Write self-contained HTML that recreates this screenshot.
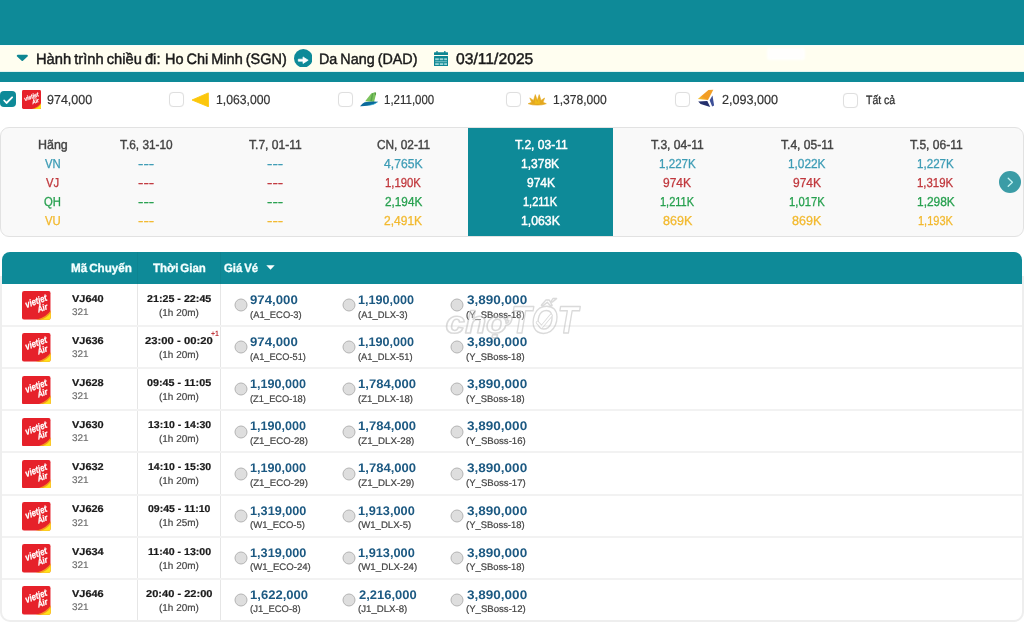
<!DOCTYPE html><html lang="vi"><head><meta charset="utf-8"><title>Hành trình chiều đi</title><style>
*{box-sizing:border-box;margin:0;padding:0}
html,body{width:1024px;height:636px;overflow:hidden;background:#fff}
body{position:relative;font-family:"Liberation Sans",sans-serif;color:#222;text-rendering:geometricPrecision}
.abs{position:absolute}
.t{position:absolute;white-space:nowrap;line-height:1;transform-origin:0 50%}
.top{left:0;top:0;width:1024px;height:82px;background:#0e8a98}
.band{left:0;top:45px;width:1024px;height:27px;background:#fffef0;border-top:1px solid #f4fcfb;border-bottom:1px solid #e4f4ee}
.patch{left:767px;top:48px;width:38px;height:12px;background:#fff;border-radius:3px;filter:blur(1px);opacity:.9}
.cb{width:15px;height:15px;border:1px solid #dfdfdf;border-radius:4px;background:#fff;top:92px;box-shadow:0 0 1px rgba(0,0,0,.06)}
.cbon{left:0;top:91.3px;width:16px;height:15.5px;border-radius:4px;background:#0e8a98}
.grid{left:0;top:127px;width:1024px;height:110px;border:1px solid #e2e2e2;border-radius:9px;background:#f9f9f9}
.sel{left:468px;top:128px;width:145px;height:108px;background:#0e8a98}
.nx{left:999px;top:171px;width:22px;height:22px;border-radius:50%;background:#3b9ca6}
.th{left:2px;top:252px;width:1020px;height:32px;background:#0e8a98;border-radius:8px 8px 0 0}
.tb{left:0;top:276px;width:1024px;height:346px;border:2px solid #eee;border-top:0;border-radius:0 0 10px 10px}
.hl{left:2px;width:1020px;height:2px;background:#f2f2f2}
.vl{top:284px;width:1px;height:336px;background:#e6e6e6}
.vh{top:252px;width:1px;height:32px;background:rgba(0,0,0,.045)}
.rd{width:13px;height:13px;border-radius:50%;background:#dedede;border:1px solid #b9b9b9}
</style></head><body>
<div class="abs top"></div><div class="abs band"></div><div class="abs patch"></div>
<svg class="abs" style="left:16px;top:54px" width="13" height="8" viewBox="0 0 13 8"><path d="M1.7 1.8 L10.9 1.8 L6.3 6Z" fill="#0e8692" stroke="#0e8692" stroke-linejoin="round" stroke-width="1.9"/></svg>
<div class="t" style="left:36.12px;top:52px;font-size:15px;color:#1a1a1a;transform:scaleX(0.9794);word-spacing:-1px;-webkit-text-stroke:.45px #1a1a1a;">Hành trình chiều đi:</div>
<div class="t" style="left:165.04px;top:52px;font-size:15px;color:#1a1a1a;transform:scaleX(0.9646);word-spacing:-1px;-webkit-text-stroke:.45px #1a1a1a;">Ho Chi Minh (SGN)</div>
<svg class="abs" style="left:293.9px;top:48.9px" width="18.6" height="18.6" viewBox="0 0 18.6 18.6"><circle cx="9.3" cy="9.3" r="9.3" fill="#0e8a98"/><path d="M4.3 10.2 H9 V7.9 L14.2 11.2 L9 14.5 V12.2 H4.3 Z" fill="#fff" stroke="#fff" stroke-width=".7" stroke-linejoin="round"/></svg>
<div class="t" style="left:318.95px;top:52px;font-size:15px;color:#1a1a1a;transform:scaleX(0.9561);word-spacing:-1px;-webkit-text-stroke:.45px #1a1a1a;">Da Nang (DAD)</div>
<svg class="abs" style="left:433.9px;top:50.6px" width="14.2" height="15.4" viewBox="0 0 14.2 15.4"><g fill="#0e8692"><rect x="2.3" y="0" width="1.4" height="2" rx=".5"/><rect x="10.1" y="0" width="1.4" height="2" rx=".5"/><rect x="0" y="1.3" width="14.1" height="2.8" rx=".6"/><rect x="0" y="5.1" width="14.1" height="10.1" rx=".5"/></g><g fill="#c9f1ee" opacity=".75"><rect x="1.2" y="7.3" width="3.6" height="1.9"/><rect x="5.7" y="7.3" width="3.6" height="1.9"/><rect x="10.2" y="7.3" width="2.8" height="1.9"/><rect x="1.2" y="10.4" width="11.8" height=".8"/><rect x="1.2" y="12.2" width="3.6" height="1.8"/><rect x="5.7" y="12.2" width="3.6" height="1.8"/><rect x="10.2" y="12.2" width="2.8" height="1.8"/></g></svg>
<div class="t" style="left:455.53px;top:52px;font-size:15.5px;color:#1a1a1a;transform:scaleX(1.0119);-webkit-text-stroke:.45px #1a1a1a;">03/11/2025</div>
<div class="abs cbon"></div><svg class="abs" style="left:2px;top:94px" width="12" height="11" viewBox="0 0 12 11"><path d="M2.2 6.5 L4.5 9 L10.1 3.3" fill="none" stroke="#fff" stroke-width="1.8" stroke-linecap="round" stroke-linejoin="round"/></svg>
<svg class="abs" style="left:22.25px;top:89.7px;opacity:.995" width="19" height="19" viewBox="0 0 28.7 28.7"><defs><clipPath id="lc1"><rect width="28.7" height="28.7" rx="2.2"/></clipPath></defs><g clip-path="url(#lc1)"><rect width="28.7" height="28.7" fill="#e6212a"/><path d="M29 19 L29 29 L13.5 29 Q24.5 26.5 29 19Z" fill="#f7931e"/><path d="M29 21 L29 29 L18 29 Q25.5 27 29 21Z" fill="#fde21a"/></g><g font-family="Liberation Sans,sans-serif" font-weight="bold" font-style="italic" fill="#fff" text-anchor="middle"><text x="14.2" y="13.4" font-size="9.6" textLength="22.6" lengthAdjust="spacingAndGlyphs" transform="rotate(-20 14.2 10.4)" stroke="#fff" stroke-width=".25">vietjet</text><text x="20.4" y="19.9" font-size="8.6" textLength="10.6" lengthAdjust="spacingAndGlyphs" transform="rotate(-20 20.4 17)" stroke="#fff" stroke-width=".25">Air</text></g></svg>
<div class="t" style="left:47.40px;top:93px;font-size:13px;color:#333;transform:scaleX(0.9608);-webkit-text-stroke:.2px #333;">974,000</div>
<div class="abs cb" style="left:168.8px"></div>
<svg class="abs" style="left:191px;top:91.5px" width="18.5" height="15.5" viewBox="0 0 18.5 15.5"><path d="M1 8 L17.3 0.9 L17.5 14.8 Z" fill="#fcc70c" stroke="#fcc70c" stroke-width=".9" stroke-linejoin="round"/></svg>
<div class="t" style="left:216.04px;top:93px;font-size:13px;color:#333;transform:scaleX(0.9406);-webkit-text-stroke:.2px #333;">1,063,000</div>
<div class="abs cb" style="left:337.6px"></div>
<svg class="abs" style="left:359px;top:91px" width="20" height="17" viewBox="0 0 20 17"><path d="M6.1 10.3 L12.2 2.4 L16.5 0.9 L17.1 2.8 L15.1 10.9 Z" fill="#7cc25c"/><path d="M11.3 10 L13 2.4 L14.3 1.9 L13 10Z" fill="#4f9f46" opacity=".8"/><path d="M15.6 2 L16.6 1.6 L16.9 3 L16.4 4.6Z" fill="#3c7a3a" opacity=".8"/><path d="M1 15.2 Q3.5 12 5.6 11.2 Q12 10.2 19.2 10.7 Q16 13 14.2 13.4 Q8 15.4 1 15.2Z" fill="#0b6a9c"/><path d="M8 14.6 Q14 13.6 19.2 10.7 Q16 13.4 13.6 14 Q11 14.7 8 14.6Z" fill="#36b3d6" opacity=".8"/></svg>
<div class="t" style="left:384.20px;top:93px;font-size:13px;color:#333;transform:scaleX(0.8831);-webkit-text-stroke:.2px #333;">1,211,000</div>
<div class="abs cb" style="left:506.2px"></div>
<svg class="abs" style="left:528px;top:93.5px" width="19" height="12" viewBox="0 0 19 12"><path d="M0.2 9.7 L3.6 8.3 L1.8 3.9 L5.5 6.4 L7.3 0.6 L9.3 6.4 L11.2 0.6 L13 6.4 L16.6 4 L15 8.3 L18.3 9.7 Q14 11.3 9.2 11.1 Q4.5 11.3 0.2 9.7Z" fill="#e4a81f" stroke="#e4a81f" stroke-width=".6" stroke-linejoin="round"/><path d="M6.6 9.8 L7.4 3.2 L9.3 8.6 L11.1 3.2 L12 9.8Z" fill="#f2c318" opacity=".7"/></svg>
<div class="t" style="left:552.90px;top:93px;font-size:13px;color:#333;transform:scaleX(0.9300);-webkit-text-stroke:.2px #333;">1,378,000</div>
<div class="abs cb" style="left:674.9px"></div>
<svg class="abs" style="left:697px;top:89px" width="18" height="19" viewBox="0 0 18 19"><defs><linearGradient id="vg" x1="0" y1="1" x2="1" y2="0"><stop offset="0" stop-color="#f3cf3a"/><stop offset=".35" stop-color="#f39c22"/><stop offset="1" stop-color="#f0a02a"/></linearGradient></defs><path d="M0.8 10.1 L11.4 1.1 L16.3 0.7 L11 10.9Z" fill="url(#vg)"/><path d="M1.2 12.6 L10.3 12.1 L13.2 17.9 L3.6 15Z" fill="#232f6c"/><path d="M12.6 11.3 L15.5 6.6 L17.1 16.5 L15.2 17.5Z" fill="#3d4f97"/></svg>
<div class="t" style="left:721.77px;top:93px;font-size:13px;color:#333;transform:scaleX(0.9698);-webkit-text-stroke:.2px #333;">2,093,000</div>
<div class="abs cb" style="left:843.2px;top:93px"></div>
<div class="t" style="left:865.54px;top:94px;font-size:12px;color:#333;transform:scaleX(0.8748);-webkit-text-stroke:.3px #333;">Tất cả</div>
<div class="abs grid"></div><div class="abs sel"></div>
<div class="t" style="left:37.70px;top:138px;font-size:13px;color:#444;transform:scaleX(0.9588);-webkit-text-stroke:.4px #444;">Hãng</div>
<div class="t" style="left:44.95px;top:157px;font-size:13px;color:#3d9cb5;transform:scaleX(0.8700);-webkit-text-stroke:.3px #3d9cb5;">VN</div>
<div class="t" style="left:46.20px;top:176px;font-size:13px;color:#c0383d;transform:scaleX(0.8700);-webkit-text-stroke:.3px #c0383d;">VJ</div>
<div class="t" style="left:44.10px;top:195px;font-size:13px;color:#27a04f;transform:scaleX(0.8700);-webkit-text-stroke:.3px #27a04f;">QH</div>
<div class="t" style="left:44.95px;top:214px;font-size:13px;color:#f2b92f;transform:scaleX(0.8700);-webkit-text-stroke:.3px #f2b92f;">VU</div>
<div class="t" style="left:119.56px;top:138px;font-size:13px;color:#444;transform:scaleX(0.9109);-webkit-text-stroke:.4px #444;">T.6, 31-10</div>
<div class="t" style="left:137.75px;top:157px;font-size:13px;color:#3d9cb5;transform:scaleX(1.2428);-webkit-text-stroke:.3px #3d9cb5;">---</div>
<div class="t" style="left:137.75px;top:176px;font-size:13px;color:#c0383d;transform:scaleX(1.2428);-webkit-text-stroke:.3px #c0383d;">---</div>
<div class="t" style="left:137.75px;top:195px;font-size:13px;color:#27a04f;transform:scaleX(1.2428);-webkit-text-stroke:.3px #27a04f;">---</div>
<div class="t" style="left:137.75px;top:214px;font-size:13px;color:#f2b92f;transform:scaleX(1.2428);-webkit-text-stroke:.3px #f2b92f;">---</div>
<div class="t" style="left:248.56px;top:138px;font-size:13px;color:#444;transform:scaleX(0.9287);-webkit-text-stroke:.4px #444;">T.7, 01-11</div>
<div class="t" style="left:266.75px;top:157px;font-size:13px;color:#3d9cb5;transform:scaleX(1.2428);-webkit-text-stroke:.3px #3d9cb5;">---</div>
<div class="t" style="left:266.75px;top:176px;font-size:13px;color:#c0383d;transform:scaleX(1.2428);-webkit-text-stroke:.3px #c0383d;">---</div>
<div class="t" style="left:266.75px;top:195px;font-size:13px;color:#27a04f;transform:scaleX(1.2428);-webkit-text-stroke:.3px #27a04f;">---</div>
<div class="t" style="left:266.75px;top:214px;font-size:13px;color:#f2b92f;transform:scaleX(1.2428);-webkit-text-stroke:.3px #f2b92f;">---</div>
<div class="t" style="left:377.11px;top:138px;font-size:13px;color:#444;transform:scaleX(0.9117);-webkit-text-stroke:.4px #444;">CN, 02-11</div>
<div class="t" style="left:384.36px;top:157px;font-size:13px;color:#3d9cb5;transform:scaleX(0.9351);-webkit-text-stroke:.3px #3d9cb5;">4,765K</div>
<div class="t" style="left:385.41px;top:176px;font-size:13px;color:#c0383d;transform:scaleX(0.8706);-webkit-text-stroke:.3px #c0383d;">1,190K</div>
<div class="t" style="left:384.81px;top:195px;font-size:13px;color:#27a04f;transform:scaleX(0.9046);-webkit-text-stroke:.3px #27a04f;">2,194K</div>
<div class="t" style="left:384.40px;top:214px;font-size:13px;color:#f2b92f;transform:scaleX(0.9243);-webkit-text-stroke:.3px #f2b92f;">2,491K</div>
<div class="t" style="left:514.56px;top:138px;font-size:13px;color:#fff;transform:scaleX(0.9287);-webkit-text-stroke:.45px #fff;">T.2, 03-11</div>
<div class="t" style="left:521.36px;top:157px;font-size:13px;color:#fff;transform:scaleX(0.9253);-webkit-text-stroke:.45px #fff;">1,378K</div>
<div class="t" style="left:526.57px;top:176px;font-size:13px;color:#fff;transform:scaleX(0.9244);-webkit-text-stroke:.45px #fff;">974K</div>
<div class="t" style="left:523.43px;top:195px;font-size:13px;color:#fff;transform:scaleX(0.8461);-webkit-text-stroke:.45px #fff;">1,211K</div>
<div class="t" style="left:520.99px;top:214px;font-size:13px;color:#fff;transform:scaleX(0.9427);-webkit-text-stroke:.45px #fff;">1,063K</div>
<div class="t" style="left:651.46px;top:138px;font-size:13px;color:#444;transform:scaleX(0.9287);-webkit-text-stroke:.4px #444;">T.3, 04-11</div>
<div class="t" style="left:658.94px;top:157px;font-size:13px;color:#3d9cb5;transform:scaleX(0.8930);-webkit-text-stroke:.3px #3d9cb5;">1,227K</div>
<div class="t" style="left:663.47px;top:176px;font-size:13px;color:#c0383d;transform:scaleX(0.9244);-webkit-text-stroke:.3px #c0383d;">974K</div>
<div class="t" style="left:660.33px;top:195px;font-size:13px;color:#27a04f;transform:scaleX(0.8461);-webkit-text-stroke:.3px #27a04f;">1,211K</div>
<div class="t" style="left:662.85px;top:214px;font-size:13px;color:#f2b92f;transform:scaleX(0.9647);-webkit-text-stroke:.3px #f2b92f;">869K</div>
<div class="t" style="left:780.56px;top:138px;font-size:13px;color:#444;transform:scaleX(0.9287);-webkit-text-stroke:.4px #444;">T.4, 05-11</div>
<div class="t" style="left:787.67px;top:157px;font-size:13px;color:#3d9cb5;transform:scaleX(0.9104);-webkit-text-stroke:.3px #3d9cb5;">1,022K</div>
<div class="t" style="left:792.57px;top:176px;font-size:13px;color:#c0383d;transform:scaleX(0.9244);-webkit-text-stroke:.3px #c0383d;">974K</div>
<div class="t" style="left:788.61px;top:195px;font-size:13px;color:#27a04f;transform:scaleX(0.8656);-webkit-text-stroke:.3px #27a04f;">1,017K</div>
<div class="t" style="left:791.95px;top:214px;font-size:13px;color:#f2b92f;transform:scaleX(0.9647);-webkit-text-stroke:.3px #f2b92f;">869K</div>
<div class="t" style="left:909.56px;top:138px;font-size:13px;color:#444;transform:scaleX(0.9287);-webkit-text-stroke:.4px #444;">T.5, 06-11</div>
<div class="t" style="left:917.04px;top:157px;font-size:13px;color:#3d9cb5;transform:scaleX(0.8930);-webkit-text-stroke:.3px #3d9cb5;">1,227K</div>
<div class="t" style="left:917.35px;top:176px;font-size:13px;color:#c0383d;transform:scaleX(0.8781);-webkit-text-stroke:.3px #c0383d;">1,319K</div>
<div class="t" style="left:916.51px;top:195px;font-size:13px;color:#27a04f;transform:scaleX(0.9179);-webkit-text-stroke:.3px #27a04f;">1,298K</div>
<div class="t" style="left:918.03px;top:214px;font-size:13px;color:#f2b92f;transform:scaleX(0.8457);-webkit-text-stroke:.3px #f2b92f;">1,193K</div>
<div class="abs nx"></div><svg class="abs" style="left:1005px;top:176px" width="10" height="12" viewBox="0 0 10 12"><path d="M3.2 2.3 L7.4 6.3 L3.2 10.3" fill="none" stroke="#c4f3f3" stroke-width="1.3" stroke-linecap="round" stroke-linejoin="round"/></svg>
<div class="abs tb"></div><div class="abs th"></div>
<div class="t" style="left:71.00px;top:262px;font-size:12px;color:#f4ffff;font-weight:bold;transform:scaleX(0.9713);word-spacing:-1.3px;-webkit-text-stroke:.3px #f4ffff;">Mã Chuyến</div>
<div class="t" style="left:153.19px;top:262px;font-size:12px;color:#f4ffff;font-weight:bold;transform:scaleX(0.9562);word-spacing:-1.3px;-webkit-text-stroke:.3px #f4ffff;">Thời Gian</div>
<div class="t" style="left:223.75px;top:262px;font-size:12px;color:#f4ffff;font-weight:bold;transform:scaleX(0.9444);word-spacing:-1.3px;-webkit-text-stroke:.3px #f4ffff;">Giá Vé</div>
<svg class="abs" style="left:266px;top:265px" width="9" height="5" viewBox="0 0 9 5"><path d="M0.3 0.3 L8.7 0.3 L4.5 4.8Z" fill="#fff"/></svg>
<div class="abs vl" style="left:137px"></div><div class="abs vl" style="left:220px"></div><div class="abs vh" style="left:137px"></div><div class="abs vh" style="left:220px"></div>
<svg class="abs" style="left:22.3px;top:291.3px;opacity:.995" width="28.7" height="28.7" viewBox="0 0 28.7 28.7"><defs><clipPath id="lc2"><rect width="28.7" height="28.7" rx="2.2"/></clipPath></defs><g clip-path="url(#lc2)"><rect width="28.7" height="28.7" fill="#e6212a"/><path d="M29 19 L29 29 L13.5 29 Q24.5 26.5 29 19Z" fill="#f7931e"/><path d="M29 21 L29 29 L18 29 Q25.5 27 29 21Z" fill="#fde21a"/></g><g font-family="Liberation Sans,sans-serif" font-weight="bold" font-style="italic" fill="#fff" text-anchor="middle"><text x="14.2" y="13.4" font-size="9.6" textLength="22.6" lengthAdjust="spacingAndGlyphs" transform="rotate(-20 14.2 10.4)" stroke="#fff" stroke-width=".25">vietjet</text><text x="20.4" y="19.9" font-size="8.6" textLength="10.6" lengthAdjust="spacingAndGlyphs" transform="rotate(-20 20.4 17)" stroke="#fff" stroke-width=".25">Air</text></g></svg>
<div class="t" style="left:72.10px;top:295px;font-size:10px;color:#1a1a1a;font-weight:bold;transform:scaleX(1.0961);-webkit-text-stroke:.2px #1a1a1a;">VJ640</div>
<div class="t" style="left:71.60px;top:308px;font-size:9.5px;color:#6c6c6c;transform:scaleX(1.0511);-webkit-text-stroke:.15px #6c6c6c;">321</div>
<div class="t" style="left:147.13px;top:295px;font-size:10px;color:#1a1a1a;font-weight:bold;transform:scaleX(1.0710);-webkit-text-stroke:.2px #1a1a1a;">21:25 - 22:45</div>
<div class="t" style="left:159.35px;top:309px;font-size:10px;color:#444;transform:scaleX(0.9953);-webkit-text-stroke:.2px #444;">(1h 20m)</div>
<svg class="abs" style="left:232.60px;top:297.20px" width="16" height="16" viewBox="0 0 16 16"><circle cx="8" cy="8" r="6" fill="#dedede" stroke="#b4b4b4" stroke-width="1"/></svg>
<div class="t" style="left:250.20px;top:294px;font-size:12.5px;color:#1c5982;font-weight:bold;transform:scaleX(1.0573);">974,000</div>
<div class="t" style="left:250.04px;top:311px;font-size:9.5px;color:#444;transform:scaleX(0.9885);-webkit-text-stroke:.2px #444;">(A1_ECO-3)</div>
<svg class="abs" style="left:340.70px;top:297.20px" width="16" height="16" viewBox="0 0 16 16"><circle cx="8" cy="8" r="6" fill="#dedede" stroke="#b4b4b4" stroke-width="1"/></svg>
<div class="t" style="left:358.24px;top:294px;font-size:12.5px;color:#1c5982;font-weight:bold;transform:scaleX(1.0091);">1,190,000</div>
<div class="t" style="left:358.44px;top:311px;font-size:9.5px;color:#444;transform:scaleX(0.9881);-webkit-text-stroke:.2px #444;">(A1_DLX-3)</div>
<svg class="abs" style="left:448.90px;top:297.20px" width="16" height="16" viewBox="0 0 16 16"><circle cx="8" cy="8" r="6" fill="#dedede" stroke="#b4b4b4" stroke-width="1"/></svg>
<div class="t" style="left:466.63px;top:294px;font-size:12.5px;color:#1c5982;font-weight:bold;transform:scaleX(1.0818);">3,890,000</div>
<div class="t" style="left:466.34px;top:311px;font-size:9.5px;color:#444;transform:scaleX(0.9904);-webkit-text-stroke:.2px #444;">(Y_SBoss-18)</div>
<div class="abs hl" style="top:325px"></div>
<svg class="abs" style="left:22.3px;top:333.4px;opacity:.995" width="28.7" height="28.7" viewBox="0 0 28.7 28.7"><defs><clipPath id="lc3"><rect width="28.7" height="28.7" rx="2.2"/></clipPath></defs><g clip-path="url(#lc3)"><rect width="28.7" height="28.7" fill="#e6212a"/><path d="M29 19 L29 29 L13.5 29 Q24.5 26.5 29 19Z" fill="#f7931e"/><path d="M29 21 L29 29 L18 29 Q25.5 27 29 21Z" fill="#fde21a"/></g><g font-family="Liberation Sans,sans-serif" font-weight="bold" font-style="italic" fill="#fff" text-anchor="middle"><text x="14.2" y="13.4" font-size="9.6" textLength="22.6" lengthAdjust="spacingAndGlyphs" transform="rotate(-20 14.2 10.4)" stroke="#fff" stroke-width=".25">vietjet</text><text x="20.4" y="19.9" font-size="8.6" textLength="10.6" lengthAdjust="spacingAndGlyphs" transform="rotate(-20 20.4 17)" stroke="#fff" stroke-width=".25">Air</text></g></svg>
<div class="t" style="left:72.10px;top:337px;font-size:10px;color:#1a1a1a;font-weight:bold;transform:scaleX(1.0961);-webkit-text-stroke:.2px #1a1a1a;">VJ636</div>
<div class="t" style="left:71.60px;top:350px;font-size:9.5px;color:#6c6c6c;transform:scaleX(1.0511);-webkit-text-stroke:.15px #6c6c6c;">321</div>
<div class="t" style="left:145.46px;top:337px;font-size:10px;color:#1a1a1a;font-weight:bold;transform:scaleX(1.1284);-webkit-text-stroke:.2px #1a1a1a;">23:00 - 00:20</div>
<div class="t" style="left:159.35px;top:351px;font-size:10px;color:#444;transform:scaleX(0.9953);-webkit-text-stroke:.2px #444;">(1h 20m)</div>
<div class="t" style="left:211.02px;top:330px;font-size:7.5px;color:#c0383d;font-weight:bold;transform:scaleX(0.9187);">+1</div>
<svg class="abs" style="left:232.60px;top:339.30px" width="16" height="16" viewBox="0 0 16 16"><circle cx="8" cy="8" r="6" fill="#dedede" stroke="#b4b4b4" stroke-width="1"/></svg>
<div class="t" style="left:250.20px;top:336px;font-size:12.5px;color:#1c5982;font-weight:bold;transform:scaleX(1.0573);">974,000</div>
<div class="t" style="left:250.05px;top:353px;font-size:9.5px;color:#444;transform:scaleX(0.9704);-webkit-text-stroke:.2px #444;">(A1_ECO-51)</div>
<svg class="abs" style="left:340.70px;top:339.30px" width="16" height="16" viewBox="0 0 16 16"><circle cx="8" cy="8" r="6" fill="#dedede" stroke="#b4b4b4" stroke-width="1"/></svg>
<div class="t" style="left:358.24px;top:336px;font-size:12.5px;color:#1c5982;font-weight:bold;transform:scaleX(1.0091);">1,190,000</div>
<div class="t" style="left:358.44px;top:353px;font-size:9.5px;color:#444;transform:scaleX(0.9840);-webkit-text-stroke:.2px #444;">(A1_DLX-51)</div>
<svg class="abs" style="left:448.90px;top:339.30px" width="16" height="16" viewBox="0 0 16 16"><circle cx="8" cy="8" r="6" fill="#dedede" stroke="#b4b4b4" stroke-width="1"/></svg>
<div class="t" style="left:466.63px;top:336px;font-size:12.5px;color:#1c5982;font-weight:bold;transform:scaleX(1.0818);">3,890,000</div>
<div class="t" style="left:466.34px;top:353px;font-size:9.5px;color:#444;transform:scaleX(0.9904);-webkit-text-stroke:.2px #444;">(Y_SBoss-18)</div>
<div class="abs hl" style="top:367px"></div>
<svg class="abs" style="left:22.3px;top:375.5px;opacity:.995" width="28.7" height="28.7" viewBox="0 0 28.7 28.7"><defs><clipPath id="lc4"><rect width="28.7" height="28.7" rx="2.2"/></clipPath></defs><g clip-path="url(#lc4)"><rect width="28.7" height="28.7" fill="#e6212a"/><path d="M29 19 L29 29 L13.5 29 Q24.5 26.5 29 19Z" fill="#f7931e"/><path d="M29 21 L29 29 L18 29 Q25.5 27 29 21Z" fill="#fde21a"/></g><g font-family="Liberation Sans,sans-serif" font-weight="bold" font-style="italic" fill="#fff" text-anchor="middle"><text x="14.2" y="13.4" font-size="9.6" textLength="22.6" lengthAdjust="spacingAndGlyphs" transform="rotate(-20 14.2 10.4)" stroke="#fff" stroke-width=".25">vietjet</text><text x="20.4" y="19.9" font-size="8.6" textLength="10.6" lengthAdjust="spacingAndGlyphs" transform="rotate(-20 20.4 17)" stroke="#fff" stroke-width=".25">Air</text></g></svg>
<div class="t" style="left:72.10px;top:379px;font-size:10px;color:#1a1a1a;font-weight:bold;transform:scaleX(1.0961);-webkit-text-stroke:.2px #1a1a1a;">VJ628</div>
<div class="t" style="left:71.60px;top:392px;font-size:9.5px;color:#6c6c6c;transform:scaleX(1.0511);-webkit-text-stroke:.15px #6c6c6c;">321</div>
<div class="t" style="left:147.18px;top:379px;font-size:10px;color:#1a1a1a;font-weight:bold;transform:scaleX(1.0793);-webkit-text-stroke:.2px #1a1a1a;">09:45 - 11:05</div>
<div class="t" style="left:159.35px;top:393px;font-size:10px;color:#444;transform:scaleX(0.9953);-webkit-text-stroke:.2px #444;">(1h 20m)</div>
<svg class="abs" style="left:232.60px;top:381.40px" width="16" height="16" viewBox="0 0 16 16"><circle cx="8" cy="8" r="6" fill="#dedede" stroke="#b4b4b4" stroke-width="1"/></svg>
<div class="t" style="left:249.84px;top:378px;font-size:12.5px;color:#1c5982;font-weight:bold;transform:scaleX(1.0091);">1,190,000</div>
<div class="t" style="left:250.04px;top:395px;font-size:9.5px;color:#444;transform:scaleX(0.9796);-webkit-text-stroke:.2px #444;">(Z1_ECO-18)</div>
<svg class="abs" style="left:340.70px;top:381.40px" width="16" height="16" viewBox="0 0 16 16"><circle cx="8" cy="8" r="6" fill="#dedede" stroke="#b4b4b4" stroke-width="1"/></svg>
<div class="t" style="left:358.22px;top:378px;font-size:12.5px;color:#1c5982;font-weight:bold;transform:scaleX(1.0440);">1,784,000</div>
<div class="t" style="left:358.43px;top:395px;font-size:9.5px;color:#444;transform:scaleX(1.0015);-webkit-text-stroke:.2px #444;">(Z1_DLX-18)</div>
<svg class="abs" style="left:448.90px;top:381.40px" width="16" height="16" viewBox="0 0 16 16"><circle cx="8" cy="8" r="6" fill="#dedede" stroke="#b4b4b4" stroke-width="1"/></svg>
<div class="t" style="left:466.63px;top:378px;font-size:12.5px;color:#1c5982;font-weight:bold;transform:scaleX(1.0818);">3,890,000</div>
<div class="t" style="left:466.34px;top:395px;font-size:9.5px;color:#444;transform:scaleX(0.9904);-webkit-text-stroke:.2px #444;">(Y_SBoss-18)</div>
<div class="abs hl" style="top:409px"></div>
<svg class="abs" style="left:22.3px;top:417.7px;opacity:.995" width="28.7" height="28.7" viewBox="0 0 28.7 28.7"><defs><clipPath id="lc5"><rect width="28.7" height="28.7" rx="2.2"/></clipPath></defs><g clip-path="url(#lc5)"><rect width="28.7" height="28.7" fill="#e6212a"/><path d="M29 19 L29 29 L13.5 29 Q24.5 26.5 29 19Z" fill="#f7931e"/><path d="M29 21 L29 29 L18 29 Q25.5 27 29 21Z" fill="#fde21a"/></g><g font-family="Liberation Sans,sans-serif" font-weight="bold" font-style="italic" fill="#fff" text-anchor="middle"><text x="14.2" y="13.4" font-size="9.6" textLength="22.6" lengthAdjust="spacingAndGlyphs" transform="rotate(-20 14.2 10.4)" stroke="#fff" stroke-width=".25">vietjet</text><text x="20.4" y="19.9" font-size="8.6" textLength="10.6" lengthAdjust="spacingAndGlyphs" transform="rotate(-20 20.4 17)" stroke="#fff" stroke-width=".25">Air</text></g></svg>
<div class="t" style="left:72.10px;top:421px;font-size:10px;color:#1a1a1a;font-weight:bold;transform:scaleX(1.0961);-webkit-text-stroke:.2px #1a1a1a;">VJ630</div>
<div class="t" style="left:71.60px;top:434px;font-size:9.5px;color:#6c6c6c;transform:scaleX(1.0511);-webkit-text-stroke:.15px #6c6c6c;">321</div>
<div class="t" style="left:147.62px;top:421px;font-size:10px;color:#1a1a1a;font-weight:bold;transform:scaleX(1.0512);-webkit-text-stroke:.2px #1a1a1a;">13:10 - 14:30</div>
<div class="t" style="left:159.35px;top:435px;font-size:10px;color:#444;transform:scaleX(0.9953);-webkit-text-stroke:.2px #444;">(1h 20m)</div>
<svg class="abs" style="left:232.60px;top:423.60px" width="16" height="16" viewBox="0 0 16 16"><circle cx="8" cy="8" r="6" fill="#dedede" stroke="#b4b4b4" stroke-width="1"/></svg>
<div class="t" style="left:249.84px;top:420px;font-size:12.5px;color:#1c5982;font-weight:bold;transform:scaleX(1.0091);">1,190,000</div>
<div class="t" style="left:250.02px;top:437px;font-size:9.5px;color:#444;transform:scaleX(1.0154);-webkit-text-stroke:.2px #444;">(Z1_ECO-28)</div>
<svg class="abs" style="left:340.70px;top:423.60px" width="16" height="16" viewBox="0 0 16 16"><circle cx="8" cy="8" r="6" fill="#dedede" stroke="#b4b4b4" stroke-width="1"/></svg>
<div class="t" style="left:358.22px;top:420px;font-size:12.5px;color:#1c5982;font-weight:bold;transform:scaleX(1.0440);">1,784,000</div>
<div class="t" style="left:358.42px;top:437px;font-size:9.5px;color:#444;transform:scaleX(1.0254);-webkit-text-stroke:.2px #444;">(Z1_DLX-28)</div>
<svg class="abs" style="left:448.90px;top:423.60px" width="16" height="16" viewBox="0 0 16 16"><circle cx="8" cy="8" r="6" fill="#dedede" stroke="#b4b4b4" stroke-width="1"/></svg>
<div class="t" style="left:466.63px;top:420px;font-size:12.5px;color:#1c5982;font-weight:bold;transform:scaleX(1.0818);">3,890,000</div>
<div class="t" style="left:466.32px;top:437px;font-size:9.5px;color:#444;transform:scaleX(1.0100);-webkit-text-stroke:.2px #444;">(Y_SBoss-16)</div>
<div class="abs hl" style="top:451px"></div>
<svg class="abs" style="left:22.3px;top:459.8px;opacity:.995" width="28.7" height="28.7" viewBox="0 0 28.7 28.7"><defs><clipPath id="lc6"><rect width="28.7" height="28.7" rx="2.2"/></clipPath></defs><g clip-path="url(#lc6)"><rect width="28.7" height="28.7" fill="#e6212a"/><path d="M29 19 L29 29 L13.5 29 Q24.5 26.5 29 19Z" fill="#f7931e"/><path d="M29 21 L29 29 L18 29 Q25.5 27 29 21Z" fill="#fde21a"/></g><g font-family="Liberation Sans,sans-serif" font-weight="bold" font-style="italic" fill="#fff" text-anchor="middle"><text x="14.2" y="13.4" font-size="9.6" textLength="22.6" lengthAdjust="spacingAndGlyphs" transform="rotate(-20 14.2 10.4)" stroke="#fff" stroke-width=".25">vietjet</text><text x="20.4" y="19.9" font-size="8.6" textLength="10.6" lengthAdjust="spacingAndGlyphs" transform="rotate(-20 20.4 17)" stroke="#fff" stroke-width=".25">Air</text></g></svg>
<div class="t" style="left:72.10px;top:463px;font-size:10px;color:#1a1a1a;font-weight:bold;transform:scaleX(1.0961);-webkit-text-stroke:.2px #1a1a1a;">VJ632</div>
<div class="t" style="left:71.60px;top:476px;font-size:9.5px;color:#6c6c6c;transform:scaleX(1.0511);-webkit-text-stroke:.15px #6c6c6c;">321</div>
<div class="t" style="left:147.62px;top:463px;font-size:10px;color:#1a1a1a;font-weight:bold;transform:scaleX(1.0512);-webkit-text-stroke:.2px #1a1a1a;">14:10 - 15:30</div>
<div class="t" style="left:159.35px;top:477px;font-size:10px;color:#444;transform:scaleX(0.9953);-webkit-text-stroke:.2px #444;">(1h 20m)</div>
<svg class="abs" style="left:232.60px;top:465.70px" width="16" height="16" viewBox="0 0 16 16"><circle cx="8" cy="8" r="6" fill="#dedede" stroke="#b4b4b4" stroke-width="1"/></svg>
<div class="t" style="left:249.84px;top:462px;font-size:12.5px;color:#1c5982;font-weight:bold;transform:scaleX(1.0091);">1,190,000</div>
<div class="t" style="left:250.02px;top:479px;font-size:9.5px;color:#444;transform:scaleX(1.0154);-webkit-text-stroke:.2px #444;">(Z1_ECO-29)</div>
<svg class="abs" style="left:340.70px;top:465.70px" width="16" height="16" viewBox="0 0 16 16"><circle cx="8" cy="8" r="6" fill="#dedede" stroke="#b4b4b4" stroke-width="1"/></svg>
<div class="t" style="left:358.22px;top:462px;font-size:12.5px;color:#1c5982;font-weight:bold;transform:scaleX(1.0440);">1,784,000</div>
<div class="t" style="left:358.42px;top:479px;font-size:9.5px;color:#444;transform:scaleX(1.0254);-webkit-text-stroke:.2px #444;">(Z1_DLX-29)</div>
<svg class="abs" style="left:448.90px;top:465.70px" width="16" height="16" viewBox="0 0 16 16"><circle cx="8" cy="8" r="6" fill="#dedede" stroke="#b4b4b4" stroke-width="1"/></svg>
<div class="t" style="left:466.63px;top:462px;font-size:12.5px;color:#1c5982;font-weight:bold;transform:scaleX(1.0818);">3,890,000</div>
<div class="t" style="left:466.32px;top:479px;font-size:9.5px;color:#444;transform:scaleX(1.0100);-webkit-text-stroke:.2px #444;">(Y_SBoss-17)</div>
<div class="abs hl" style="top:494px"></div>
<svg class="abs" style="left:22.3px;top:501.9px;opacity:.995" width="28.7" height="28.7" viewBox="0 0 28.7 28.7"><defs><clipPath id="lc7"><rect width="28.7" height="28.7" rx="2.2"/></clipPath></defs><g clip-path="url(#lc7)"><rect width="28.7" height="28.7" fill="#e6212a"/><path d="M29 19 L29 29 L13.5 29 Q24.5 26.5 29 19Z" fill="#f7931e"/><path d="M29 21 L29 29 L18 29 Q25.5 27 29 21Z" fill="#fde21a"/></g><g font-family="Liberation Sans,sans-serif" font-weight="bold" font-style="italic" fill="#fff" text-anchor="middle"><text x="14.2" y="13.4" font-size="9.6" textLength="22.6" lengthAdjust="spacingAndGlyphs" transform="rotate(-20 14.2 10.4)" stroke="#fff" stroke-width=".25">vietjet</text><text x="20.4" y="19.9" font-size="8.6" textLength="10.6" lengthAdjust="spacingAndGlyphs" transform="rotate(-20 20.4 17)" stroke="#fff" stroke-width=".25">Air</text></g></svg>
<div class="t" style="left:72.10px;top:505px;font-size:10px;color:#1a1a1a;font-weight:bold;transform:scaleX(1.0961);-webkit-text-stroke:.2px #1a1a1a;">VJ626</div>
<div class="t" style="left:71.60px;top:519px;font-size:9.5px;color:#6c6c6c;transform:scaleX(1.0511);-webkit-text-stroke:.15px #6c6c6c;">321</div>
<div class="t" style="left:148.14px;top:505px;font-size:10px;color:#1a1a1a;font-weight:bold;transform:scaleX(1.0489);-webkit-text-stroke:.2px #1a1a1a;">09:45 - 11:10</div>
<div class="t" style="left:159.35px;top:519px;font-size:10px;color:#444;transform:scaleX(0.9953);-webkit-text-stroke:.2px #444;">(1h 25m)</div>
<svg class="abs" style="left:232.60px;top:507.80px" width="16" height="16" viewBox="0 0 16 16"><circle cx="8" cy="8" r="6" fill="#dedede" stroke="#b4b4b4" stroke-width="1"/></svg>
<div class="t" style="left:249.84px;top:505px;font-size:12.5px;color:#1c5982;font-weight:bold;transform:scaleX(1.0146);">1,319,000</div>
<div class="t" style="left:250.03px;top:521px;font-size:9.5px;color:#444;transform:scaleX(1.0015);-webkit-text-stroke:.2px #444;">(W1_ECO-5)</div>
<svg class="abs" style="left:340.70px;top:507.80px" width="16" height="16" viewBox="0 0 16 16"><circle cx="8" cy="8" r="6" fill="#dedede" stroke="#b4b4b4" stroke-width="1"/></svg>
<div class="t" style="left:358.23px;top:505px;font-size:12.5px;color:#1c5982;font-weight:bold;transform:scaleX(1.0201);">1,913,000</div>
<div class="t" style="left:358.42px;top:521px;font-size:9.5px;color:#444;transform:scaleX(1.0094);-webkit-text-stroke:.2px #444;">(W1_DLX-5)</div>
<svg class="abs" style="left:448.90px;top:507.80px" width="16" height="16" viewBox="0 0 16 16"><circle cx="8" cy="8" r="6" fill="#dedede" stroke="#b4b4b4" stroke-width="1"/></svg>
<div class="t" style="left:466.63px;top:505px;font-size:12.5px;color:#1c5982;font-weight:bold;transform:scaleX(1.0818);">3,890,000</div>
<div class="t" style="left:466.34px;top:521px;font-size:9.5px;color:#444;transform:scaleX(0.9904);-webkit-text-stroke:.2px #444;">(Y_SBoss-18)</div>
<div class="abs hl" style="top:536px"></div>
<svg class="abs" style="left:22.3px;top:544.0px;opacity:.995" width="28.7" height="28.7" viewBox="0 0 28.7 28.7"><defs><clipPath id="lc8"><rect width="28.7" height="28.7" rx="2.2"/></clipPath></defs><g clip-path="url(#lc8)"><rect width="28.7" height="28.7" fill="#e6212a"/><path d="M29 19 L29 29 L13.5 29 Q24.5 26.5 29 19Z" fill="#f7931e"/><path d="M29 21 L29 29 L18 29 Q25.5 27 29 21Z" fill="#fde21a"/></g><g font-family="Liberation Sans,sans-serif" font-weight="bold" font-style="italic" fill="#fff" text-anchor="middle"><text x="14.2" y="13.4" font-size="9.6" textLength="22.6" lengthAdjust="spacingAndGlyphs" transform="rotate(-20 14.2 10.4)" stroke="#fff" stroke-width=".25">vietjet</text><text x="20.4" y="19.9" font-size="8.6" textLength="10.6" lengthAdjust="spacingAndGlyphs" transform="rotate(-20 20.4 17)" stroke="#fff" stroke-width=".25">Air</text></g></svg>
<div class="t" style="left:72.10px;top:548px;font-size:10px;color:#1a1a1a;font-weight:bold;transform:scaleX(1.0961);-webkit-text-stroke:.2px #1a1a1a;">VJ634</div>
<div class="t" style="left:71.60px;top:561px;font-size:9.5px;color:#6c6c6c;transform:scaleX(1.0511);-webkit-text-stroke:.15px #6c6c6c;">321</div>
<div class="t" style="left:147.61px;top:548px;font-size:10px;color:#1a1a1a;font-weight:bold;transform:scaleX(1.0611);-webkit-text-stroke:.2px #1a1a1a;">11:40 - 13:00</div>
<div class="t" style="left:159.35px;top:562px;font-size:10px;color:#444;transform:scaleX(0.9953);-webkit-text-stroke:.2px #444;">(1h 20m)</div>
<svg class="abs" style="left:232.60px;top:549.90px" width="16" height="16" viewBox="0 0 16 16"><circle cx="8" cy="8" r="6" fill="#dedede" stroke="#b4b4b4" stroke-width="1"/></svg>
<div class="t" style="left:249.84px;top:547px;font-size:12.5px;color:#1c5982;font-weight:bold;transform:scaleX(1.0146);">1,319,000</div>
<div class="t" style="left:250.02px;top:563px;font-size:9.5px;color:#444;transform:scaleX(1.0101);-webkit-text-stroke:.2px #444;">(W1_ECO-24)</div>
<svg class="abs" style="left:340.70px;top:549.90px" width="16" height="16" viewBox="0 0 16 16"><circle cx="8" cy="8" r="6" fill="#dedede" stroke="#b4b4b4" stroke-width="1"/></svg>
<div class="t" style="left:358.23px;top:547px;font-size:12.5px;color:#1c5982;font-weight:bold;transform:scaleX(1.0201);">1,913,000</div>
<div class="t" style="left:358.42px;top:563px;font-size:9.5px;color:#444;transform:scaleX(1.0193);-webkit-text-stroke:.2px #444;">(W1_DLX-24)</div>
<svg class="abs" style="left:448.90px;top:549.90px" width="16" height="16" viewBox="0 0 16 16"><circle cx="8" cy="8" r="6" fill="#dedede" stroke="#b4b4b4" stroke-width="1"/></svg>
<div class="t" style="left:466.63px;top:547px;font-size:12.5px;color:#1c5982;font-weight:bold;transform:scaleX(1.0818);">3,890,000</div>
<div class="t" style="left:466.34px;top:563px;font-size:9.5px;color:#444;transform:scaleX(0.9904);-webkit-text-stroke:.2px #444;">(Y_SBoss-18)</div>
<div class="abs hl" style="top:578px"></div>
<svg class="abs" style="left:22.3px;top:586.1px;opacity:.995" width="28.7" height="28.7" viewBox="0 0 28.7 28.7"><defs><clipPath id="lc9"><rect width="28.7" height="28.7" rx="2.2"/></clipPath></defs><g clip-path="url(#lc9)"><rect width="28.7" height="28.7" fill="#e6212a"/><path d="M29 19 L29 29 L13.5 29 Q24.5 26.5 29 19Z" fill="#f7931e"/><path d="M29 21 L29 29 L18 29 Q25.5 27 29 21Z" fill="#fde21a"/></g><g font-family="Liberation Sans,sans-serif" font-weight="bold" font-style="italic" fill="#fff" text-anchor="middle"><text x="14.2" y="13.4" font-size="9.6" textLength="22.6" lengthAdjust="spacingAndGlyphs" transform="rotate(-20 14.2 10.4)" stroke="#fff" stroke-width=".25">vietjet</text><text x="20.4" y="19.9" font-size="8.6" textLength="10.6" lengthAdjust="spacingAndGlyphs" transform="rotate(-20 20.4 17)" stroke="#fff" stroke-width=".25">Air</text></g></svg>
<div class="t" style="left:72.10px;top:590px;font-size:10px;color:#1a1a1a;font-weight:bold;transform:scaleX(1.0961);-webkit-text-stroke:.2px #1a1a1a;">VJ646</div>
<div class="t" style="left:71.60px;top:603px;font-size:9.5px;color:#6c6c6c;transform:scaleX(1.0511);-webkit-text-stroke:.15px #6c6c6c;">321</div>
<div class="t" style="left:146.07px;top:590px;font-size:10px;color:#1a1a1a;font-weight:bold;transform:scaleX(1.1082);-webkit-text-stroke:.2px #1a1a1a;">20:40 - 22:00</div>
<div class="t" style="left:159.35px;top:604px;font-size:10px;color:#444;transform:scaleX(0.9953);-webkit-text-stroke:.2px #444;">(1h 20m)</div>
<svg class="abs" style="left:232.60px;top:592.00px" width="16" height="16" viewBox="0 0 16 16"><circle cx="8" cy="8" r="6" fill="#dedede" stroke="#b4b4b4" stroke-width="1"/></svg>
<div class="t" style="left:249.82px;top:589px;font-size:12.5px;color:#1c5982;font-weight:bold;transform:scaleX(1.0440);">1,622,000</div>
<div class="t" style="left:250.03px;top:605px;font-size:9.5px;color:#444;transform:scaleX(0.9979);-webkit-text-stroke:.2px #444;">(J1_ECO-8)</div>
<svg class="abs" style="left:340.70px;top:592.00px" width="16" height="16" viewBox="0 0 16 16"><circle cx="8" cy="8" r="6" fill="#dedede" stroke="#b4b4b4" stroke-width="1"/></svg>
<div class="t" style="left:358.61px;top:589px;font-size:12.5px;color:#1c5982;font-weight:bold;transform:scaleX(1.0368);">2,216,000</div>
<div class="t" style="left:358.42px;top:605px;font-size:9.5px;color:#444;transform:scaleX(1.0148);-webkit-text-stroke:.2px #444;">(J1_DLX-8)</div>
<svg class="abs" style="left:448.90px;top:592.00px" width="16" height="16" viewBox="0 0 16 16"><circle cx="8" cy="8" r="6" fill="#dedede" stroke="#b4b4b4" stroke-width="1"/></svg>
<div class="t" style="left:466.63px;top:589px;font-size:12.5px;color:#1c5982;font-weight:bold;transform:scaleX(1.0818);">3,890,000</div>
<div class="t" style="left:466.32px;top:605px;font-size:9.5px;color:#444;transform:scaleX(1.0100);-webkit-text-stroke:.2px #444;">(Y_SBoss-12)</div>
<svg class="abs" style="left:436px;top:286px;opacity:.55" width="160" height="56" viewBox="0 0 160 56"><g font-family="Liberation Sans,sans-serif" font-weight="bold" font-style="italic" stroke-linejoin="round" font-size="31" transform="translate(9.6 46.6) scale(1.12 1)"><text x="0" y="0" fill="#fff" fill-opacity=".55" stroke="#bdbdbd" stroke-width="1.5">chợ</text></g><g font-family="Liberation Sans,sans-serif" font-weight="bold" font-style="italic" stroke-linejoin="round" font-size="38.5" transform="translate(75 46.6) scale(0.87 1)"><text x="0" y="0" fill="#fff" fill-opacity=".55" stroke="#bdbdbd" stroke-width="1.5">TỐT</text></g><path d="M101.5 36.5 L105.5 41 L115 29.5" fill="none" stroke="#bdbdbd" stroke-width="3.4" stroke-linecap="round" stroke-linejoin="round"/><path d="M101.5 36.5 L105.5 41 L115 29.5" fill="none" stroke="#fff" stroke-width="1.8" stroke-linecap="round" stroke-linejoin="round"/></svg>
</body></html>
